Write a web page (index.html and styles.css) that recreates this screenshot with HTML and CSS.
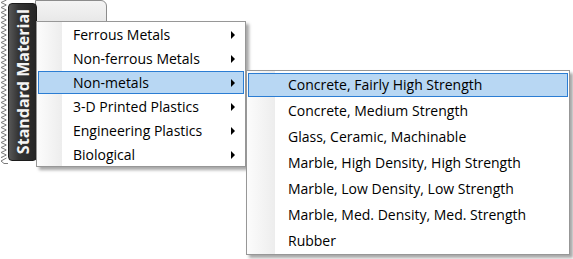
FILE: index.html
```html
<!DOCTYPE html>
<html lang="en">
<head>
    <meta charset="UTF-8">
    <title>Standard Material</title>
    <link rel="stylesheet" href="styles.css">
</head>
<body>

<div class="stage">
    <!-- vertical tab strip on the left -->
    <div class="rail">
        <svg class="torn" width="8" height="164" viewBox="0 0 8 164">
            <defs>
                <pattern id="zz" width="8" height="5" patternUnits="userSpaceOnUse">
                    <path d="M6.5 0 L1 2.5 L6.5 5" fill="none" stroke="#7a7a7a" stroke-width="1"/>
                </pattern>
            </defs>
            <rect x="0" y="0" width="8" height="158" fill="url(#zz)"/>
            <path d="M6.5 158 L1 161 L4 163.5 H8" fill="none" stroke="#7a7a7a" stroke-width="1"/>
        </svg>
        <div class="tab"><span>Standard Material</span></div>
        <div class="panel"></div>
    </div>

    <ul class="menu menu-main">
        <li>Ferrous Metals<i class="arrow"></i></li>
        <li>Non-ferrous Metals<i class="arrow"></i></li>
        <li class="on">Non-metals<i class="arrow"></i></li>
        <li>3-D Printed Plastics<i class="arrow"></i></li>
        <li>Engineering Plastics<i class="arrow"></i></li>
        <li>Biological<i class="arrow"></i></li>
    </ul>

    <ul class="menu menu-sub">
        <li class="on">Concrete, Fairly High Strength</li>
        <li>Concrete, Medium Strength</li>
        <li>Glass, Ceramic, Machinable</li>
        <li>Marble, High Density, High Strength</li>
        <li>Marble, Low Density, Low Strength</li>
        <li>Marble, Med. Density, Med. Strength</li>
        <li>Rubber</li>
    </ul>
</div>

</body>
</html>
```

FILE: styles.css
```css
* {
    box-sizing: border-box;
}
body {
    margin: 0;
    background-color: #fff;
    font-family: "Open Sans", "Noto Sans", sans-serif;
    font-size: 14px;
    color: #000;
}
.stage {
    position: relative;
    width: 573px;
    height: 259px;
    overflow: hidden;
}
.rail {
    display: flex;
    align-items: flex-start;
}
.torn {
    display: block;
    flex: none;
}
.tab {
    flex: none;
    position: relative;
    z-index: 1;
    margin-top: 3px;
    width: 29px;
    height: 158px;
    border: 1px solid #1c1c1c;
    border-radius: 4px;
    background: linear-gradient(to right, #575757, #353535 35%, #262626);
    display: flex;
    align-items: center;
    justify-content: center;
}
.tab span {
    writing-mode: vertical-rl;
    transform: rotate(180deg);
    white-space: nowrap;
    color: #f4f4f4;
    font-weight: 700;
    font-size: 16px;
}
.panel {
    flex: none;
    margin-left: -2px;
    width: 72px;
    height: 40px;
    border: 1px solid #8c8c8c;
    border-radius: 0 6px 0 0;
    background: linear-gradient(#f4f4f4, #dedede);
}
.menu {
    position: absolute;
    margin: 0;
    list-style: none;
    border: 1px solid #979797;
    box-shadow: 3px 3px 3px rgba(0, 0, 0, 0.35);
}
.menu li {
    display: flex;
    align-items: center;
    justify-content: space-between;
    border: 1px solid transparent;
    padding-bottom: 1px;
    white-space: nowrap;
}
.menu li.on {
    background-color: #b8d7f3;
    border-color: #2b7dd3;
}
.menu-main {
    left: 36px;
    top: 21px;
    width: 210px;
    padding: 1px 1px 0;
    background: linear-gradient(to right, #fcfcfc, #ededed 25px, #fff 25px);
    z-index: 2;
}
.menu-main li {
    height: 23px;
    margin-bottom: 1px;
    padding-left: 34px;
    padding-right: 8px;
}
.menu-main li:last-child {
    margin-bottom: 0;
}
.arrow {
    width: 0;
    height: 0;
    margin-top: 1px;
    border-left: 4px solid #000;
    border-top: 4px solid transparent;
    border-bottom: 4px solid transparent;
}
.menu-sub {
    left: 246px;
    top: 70px;
    width: 324px;
    padding: 2px 1px 1px;
    background: linear-gradient(to right, #fcfcfc, #ededed 28px, #fff 28px);
    z-index: 3;
}
.menu-sub li {
    height: 24px;
    margin-bottom: 2px;
    padding-left: 39px;
}
.menu-sub li:last-child {
    margin-bottom: 0;
}
```
